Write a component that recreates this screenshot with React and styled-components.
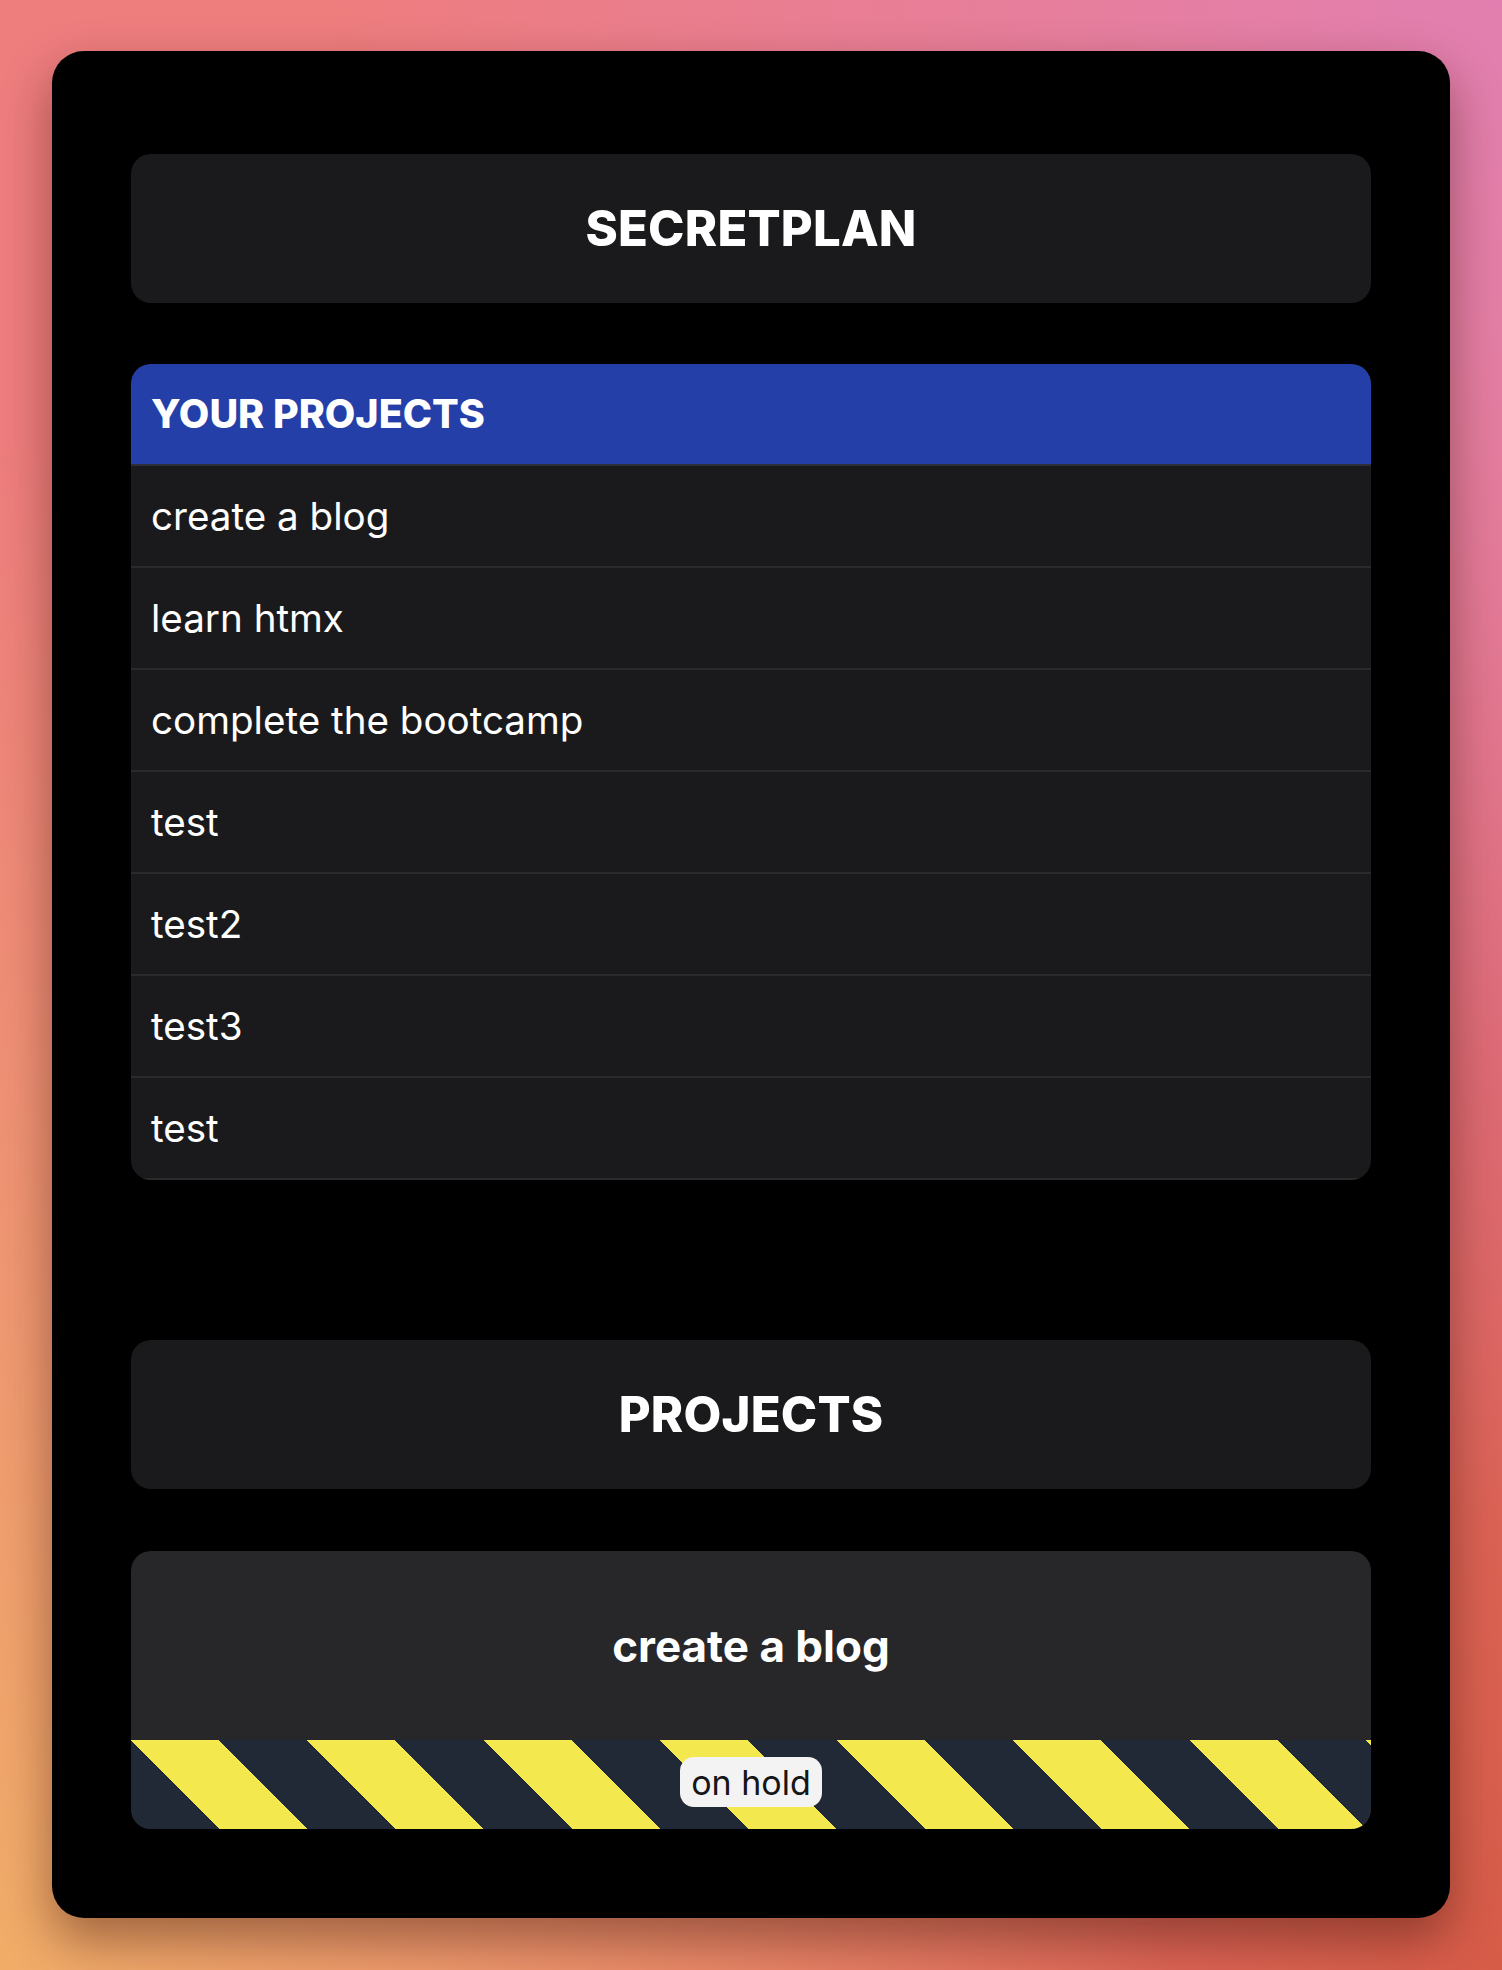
import styled, { createGlobalStyle } from "styled-components";

const GlobalStyle = createGlobalStyle`
  html, body {
    margin: 0;
    padding: 0;
  }
  body {
    min-height: 1970px;
    font-family: Inter, "Noto Sans", "Liberation Sans", sans-serif;
    background:
      radial-gradient(ellipse at 100% 0%, #e27fb0 0%, rgba(226, 127, 176, 0) 55%),
      radial-gradient(ellipse at 0% 100%, #f1ad68 0%, rgba(241, 173, 104, 0) 55%),
      radial-gradient(ellipse at 100% 100%, #d75c48 0%, rgba(215, 92, 72, 0) 60%),
      radial-gradient(ellipse at 100% 55%, #e0686e 0%, rgba(224, 104, 110, 0) 45%),
      #ee7d7e;
  }
`;

const projects = [
  "create a blog",
  "learn htmx",
  "complete the bootcamp",
  "test",
  "test2",
  "test3",
  "test",
];

const boards = [{ name: "create a blog", status: "on hold" }];

const Page = styled.div`
  display: flex;
  justify-content: center;
  padding-top: 51px;
`;

const Window = styled.main`
  width: 1398px;
  box-sizing: border-box;
  padding: 103px 79px 89px;
  background: #000;
  border-radius: 32px;
  box-shadow: 0 22px 50px rgba(60, 20, 10, 0.45);
  display: flex;
  flex-direction: column;
  gap: 160px;
`;

const Section = styled.section`
  display: flex;
  flex-direction: column;
  gap: ${(p) => p.$gap}px;
`;

const TitleBar = styled.div`
  height: 149px;
  background: #1a1a1c;
  border-radius: 20px;
  display: flex;
  align-items: center;
  justify-content: center;
`;

const Title = styled.h1`
  margin: 0;
  color: #fff;
  font-size: 49px;
  font-weight: 800;
  letter-spacing: 0.2px;
`;

const List = styled.ul`
  list-style: none;
  margin: 0;
  padding: 0;
  background: #1a1a1c;
  border-radius: 20px;
  overflow: hidden;
`;

const ListHead = styled.li`
  height: 100px;
  padding: 0 20px;
  display: flex;
  align-items: center;
  background: #253fa8;
  border-bottom: 2px solid #2d2f38;
  color: #fff;
  font-size: 39.5px;
  font-weight: 800;
`;

const Row = styled.li`
  height: 100px;
  padding: 0 20px;
  display: flex;
  align-items: center;
  border-bottom: 2px solid #2a2a2d;
  color: #fff;
  font-size: 38.6px;
  font-weight: 400;
`;

const Board = styled.article`
  border-radius: 20px;
  overflow: hidden;
  background: #272729;
`;

const BoardName = styled.h2`
  margin: 0;
  height: 189px;
  display: flex;
  align-items: center;
  justify-content: center;
  color: #fff;
  font-size: 44px;
  font-weight: 700;
`;

const Hazard = styled.div`
  height: 89px;
  display: flex;
  align-items: center;
  justify-content: center;
  background: repeating-linear-gradient(
    45deg,
    #212836 0px,
    #212836 62.4px,
    #f3e84e 62.4px,
    #f3e84e 124.8px
  );
`;

const Badge = styled.span`
  height: 50px;
  padding: 0 11px;
  display: flex;
  align-items: center;
  background: #f3f3f3;
  border-radius: 14px;
  color: #161616;
  font-size: 34px;
  margin-top: -5px;
`;

export default function App() {
  return (
    <>
      <GlobalStyle />
      <Page>
        <Window>
          <Section $gap={61}>
            <TitleBar>
              <Title>SECRETPLAN</Title>
            </TitleBar>
            <List>
              <ListHead>YOUR PROJECTS</ListHead>
              {projects.map((name, i) => (
                <Row key={i}>{name}</Row>
              ))}
            </List>
          </Section>
          <Section $gap={62}>
            <TitleBar>
              <Title>PROJECTS</Title>
            </TitleBar>
            {boards.map((b) => (
              <Board key={b.name}>
                <BoardName>{b.name}</BoardName>
                <Hazard>
                  <Badge>{b.status}</Badge>
                </Hazard>
              </Board>
            ))}
          </Section>
        </Window>
      </Page>
    </>
  );
}
